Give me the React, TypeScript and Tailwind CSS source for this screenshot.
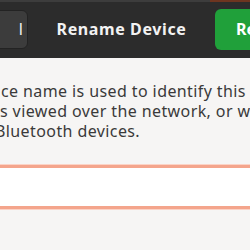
import React from "react";

export default function App() {
  return (
    <div className="w-[250px] h-[250px] overflow-hidden bg-[#f6f5f4]" style={{ fontFamily: '"Noto Sans", "Open Sans", sans-serif' }}>
      <div className="h-[58px] bg-[#2c2c2c] flex flex-col">
        <div className="h-[2px] flex shrink-0">
          <div className="flex-1 bg-[#3d3d3d]" />
          <div className="w-[40px] bg-[#6e3520]" />
        </div>
        <div className="flex-1 flex items-center justify-between pb-[2px]">
          <div className="h-[39px] w-[40px] -ml-[12px] rounded-[6px] bg-[#3c3c3c] border border-[#232323] flex items-center justify-end pr-[4px] text-[16px] text-[#f0f0f0]">
            l
          </div>
          <div className="text-[16px] font-bold text-[#f2f2f2] tracking-[0.6px]">Rename Device</div>
          <div className="h-[41px] w-[50px] -mr-[15px] rounded-[6px] bg-[#20a03a] flex items-center pl-[21px] text-[16px] font-bold text-white">
            Re
          </div>
        </div>
      </div>
      <div className="pt-[23px] text-[16px] leading-[20px] tracking-[0.4px] text-[#3a3a3a]">
        <div className="whitespace-nowrap ml-[1px]">ce name is used to identify this</div>
        <div className="whitespace-nowrap">s viewed over the network, or when</div>
        <div className="whitespace-nowrap -ml-[5px]">Bluetooth devices.</div>
      </div>
      <div className="mt-[24px] -mx-[10px] h-[44px] bg-white border-y-[3px] border-[#f4a58c] shadow-[0_0_0_1px_#fbd3c6]" />
    </div>
  );
}
